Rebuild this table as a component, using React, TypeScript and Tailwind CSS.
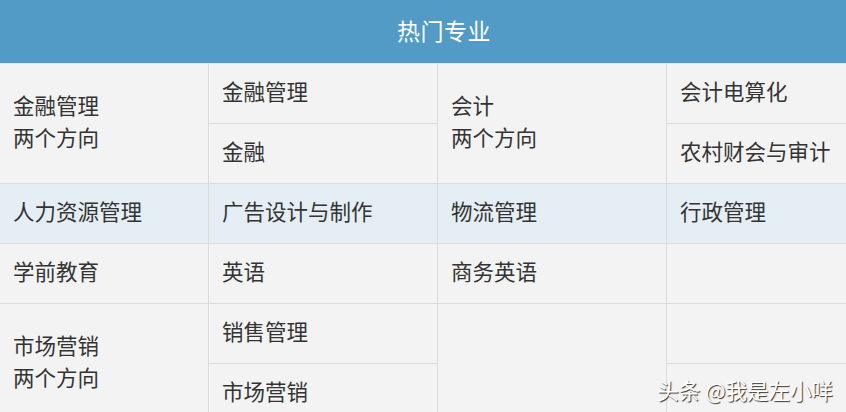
import React from 'react'

type Cell = {
  lines: string[]
  col: string
  row: string
  blue?: boolean
}

// 4 columns x 6 rows, some cells merged vertically
const cells: Cell[] = [
  { lines: ['金融管理', '两个方向'], col: 'col-start-1', row: 'row-start-1 row-span-2' },
  { lines: ['金融管理'], col: 'col-start-2', row: 'row-start-1' },
  { lines: ['金融'], col: 'col-start-2', row: 'row-start-2' },
  { lines: ['会计', '两个方向'], col: 'col-start-3', row: 'row-start-1 row-span-2' },
  { lines: ['会计电算化'], col: 'col-start-4', row: 'row-start-1' },
  { lines: ['农村财会与审计'], col: 'col-start-4', row: 'row-start-2' },

  { lines: ['人力资源管理'], col: 'col-start-1', row: 'row-start-3', blue: true },
  { lines: ['广告设计与制作'], col: 'col-start-2', row: 'row-start-3', blue: true },
  { lines: ['物流管理'], col: 'col-start-3', row: 'row-start-3', blue: true },
  { lines: ['行政管理'], col: 'col-start-4', row: 'row-start-3', blue: true },

  { lines: ['学前教育'], col: 'col-start-1', row: 'row-start-4' },
  { lines: ['英语'], col: 'col-start-2', row: 'row-start-4' },
  { lines: ['商务英语'], col: 'col-start-3', row: 'row-start-4' },
  { lines: [], col: 'col-start-4', row: 'row-start-4' },

  { lines: ['市场营销', '两个方向'], col: 'col-start-1', row: 'row-start-5 row-span-2' },
  { lines: ['销售管理'], col: 'col-start-2', row: 'row-start-5' },
  { lines: ['市场营销'], col: 'col-start-2', row: 'row-start-6' },
  { lines: [], col: 'col-start-3', row: 'row-start-5 row-span-2' },
  { lines: [], col: 'col-start-4', row: 'row-start-5' },
  { lines: [], col: 'col-start-4', row: 'row-start-6' },
]

export default function App() {
  return (
    <div className="relative w-[846px] h-[412px] overflow-hidden bg-[#f3f3f3] font-['Noto_Sans_CJK_SC',sans-serif]">
      {/* Header */}
      <div className="h-[64px] bg-[#529bc6] border-b border-[#dbe6ee] flex items-center justify-center pl-[42px] pb-[2px]">
        <h1 className="text-[23px] text-white tracking-[0.5px]">热门专业</h1>
      </div>

      {/* Table */}
      <div className="grid grid-cols-[209px_229px_229px_1fr] grid-rows-[repeat(6,60px)]">
        {cells.map((c, i) => (
          <div
            key={i}
            className={`${c.col} ${c.row} flex flex-col justify-center pl-[13px] pb-[5px] border-b border-[#dcdcdc] text-[21.5px] leading-[32px] text-[#333333] ${
              c.col === 'col-start-4' ? '' : 'border-r'
            } ${c.blue ? 'bg-[#e6eef5]' : 'bg-[#f3f3f3]'}`}
          >
            {c.lines.map((l) => (
              <span key={l}>{l}</span>
            ))}
          </div>
        ))}
      </div>

      {/* Watermark */}
      <div className="absolute right-[13px] bottom-[6px] text-[21.5px] text-white [text-shadow:1px_1px_1px_#333]">
        头条 @我是左小咩
      </div>
    </div>
  )
}
